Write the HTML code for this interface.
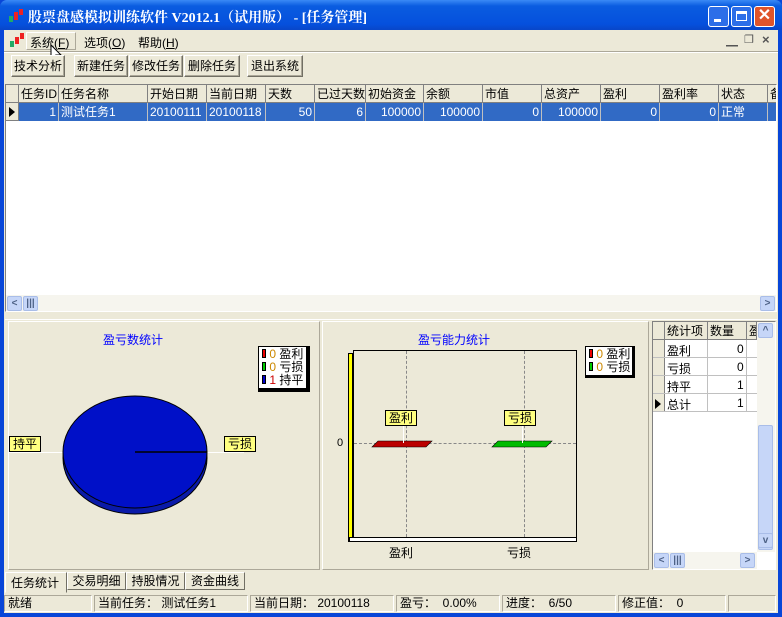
<!DOCTYPE html>
<html><head><meta charset="utf-8"><style>
*{margin:0;padding:0;box-sizing:border-box}
body{width:782px;height:617px;overflow:hidden;background:#0846d8;font-family:"Liberation Sans","WenQuanYi Zen Hei","Noto Sans CJK SC",sans-serif;font-size:12px;position:relative}
.a{position:absolute}
.btn{position:absolute;top:55px;height:22px;background:#ece9d8;border:1px solid;border-color:#fff #716f64 #716f64 #fff;box-shadow:inset -1px -1px #aca899;font-size:12px;line-height:20px;text-align:center}
.hd{position:absolute;top:0;height:18px;border-right:1px solid #808080;border-bottom:1px solid #808080;background:#ece9d8;line-height:18px;padding-left:2px;white-space:nowrap;overflow:hidden}
.cl{position:absolute;top:18px;height:18px;border-right:1px solid #c0c0c0;line-height:18px;color:#fff;background:#316ac5;white-space:nowrap;overflow:hidden;padding:0 2px}
.lab{position:absolute;background:#ffff80;border:1px solid #000;font-size:12px;line-height:14px;padding:0 3px}
.sb{position:absolute;border:1px solid;border-color:#aca899 #fff #fff #aca899;height:17px;line-height:15px;padding-left:3px;top:595px;font-size:12px}
.sc{position:absolute;width:15px;height:15px;background:#c6d6f8;border:1px solid #a9bde8;border-radius:2px;color:#4d6185;font-size:10px;line-height:13px;text-align:center;font-weight:bold}
</style></head><body>
<!-- title bar -->
<div class="a" style="left:0;top:0;width:782px;height:30px;background:linear-gradient(#3a8af6,#0a5ce0 20%,#0550dd 80%,#0846c8);border-radius:7px 7px 0 0"></div>
<div class="a" style="left:8px;top:8px;width:16px;height:16px"><div class="a" style="left:1px;top:8px;width:4px;height:6px;background:#2a6"></div><div class="a" style="left:6px;top:4px;width:4px;height:8px;background:#e22"></div><div class="a" style="left:11px;top:1px;width:4px;height:6px;background:#e22"></div></div>
<div class="a" style="left:28px;top:7px;color:#fff;font-weight:bold;font-size:14px;font-family:'Liberation Serif','Noto Serif CJK SC',serif;white-space:nowrap">股票盘感模拟训练软件 V2012.1（试用版） - [任务管理]</div>
<div class="a" style="left:708px;top:6px;width:21px;height:21px;border:1px solid #fff;border-radius:3px;background:#2c6ee8"><div class="a" style="left:5px;top:12px;width:7px;height:3px;background:#fff"></div></div>
<div class="a" style="left:731px;top:6px;width:21px;height:21px;border:1px solid #fff;border-radius:3px;background:#2c6ee8"><div class="a" style="left:4px;top:4px;width:11px;height:10px;border:1px solid #fff;border-top-width:3px"></div></div>
<div class="a" style="left:754px;top:6px;width:21px;height:21px;border:1px solid #fff;border-radius:3px;background:#e0542a;color:#fff;font-weight:bold;font-size:16px;line-height:18px;text-align:center">✕</div>
<!-- client -->
<div class="a" style="left:4px;top:30px;width:774px;height:583px;background:#ece9d8"></div>
<!-- menu -->
<div class="a" style="left:10px;top:33px;width:14px;height:14px"><div class="a" style="left:0;top:8px;width:4px;height:6px;background:#2a6"></div><div class="a" style="left:5px;top:4px;width:4px;height:7px;background:#e22"></div><div class="a" style="left:10px;top:0;width:4px;height:6px;background:#e22"></div></div>
<div class="a" style="left:26px;top:32px;width:50px;height:18px;border:1px solid;border-color:#fff #aca899 #aca899 #fff"></div>
<div class="a" style="left:30px;top:34px;white-space:nowrap">系统(<u>F</u>)</div>
<div class="a" style="left:84px;top:34px;white-space:nowrap">选项(<u>O</u>)</div>
<div class="a" style="left:138px;top:34px;white-space:nowrap">帮助(<u>H</u>)</div>
<div class="a" style="left:726px;top:32px;color:#555;font-size:12px">▁</div>
<div class="a" style="left:744px;top:33px;color:#555;font-size:11px">❐</div>
<div class="a" style="left:762px;top:32px;color:#555;font-size:13px;font-weight:bold">×</div>
<div class="a" style="left:4px;top:51px;width:774px;height:2px;border-top:1px solid #aca899;border-bottom:1px solid #fff"></div>
<!-- cursor -->
<svg class="a" style="left:50px;top:44px" width="14" height="20"><path d="M1 1 L1 15 L4 12 L7 18 L9 17 L6 11 L11 11 Z" fill="#fff" stroke="#000"/></svg>
<!-- toolbar -->
<div class="btn" style="left:11px;width:54px">技术分析</div>
<div class="btn" style="left:74px;width:54px">新建任务</div>
<div class="btn" style="left:129px;width:54px">修改任务</div>
<div class="btn" style="left:184px;width:56px">删除任务</div>
<div class="btn" style="left:247px;width:56px">退出系统</div>
<!-- grid -->
<div class="a" style="left:5px;top:84px;width:772px;height:228px;background:#fff;border:1px solid;border-color:#808080 #fff #fff #808080;overflow:hidden">
<div class="hd" style="left:0;width:13px"></div>
<div class="hd" style="left:13px;width:40px">任务ID</div>
<div class="hd" style="left:53px;width:89px">任务名称</div>
<div class="hd" style="left:142px;width:59px">开始日期</div>
<div class="hd" style="left:201px;width:59px">当前日期</div>
<div class="hd" style="left:260px;width:49px">天数</div>
<div class="hd" style="left:309px;width:51px">已过天数</div>
<div class="hd" style="left:360px;width:58px">初始资金</div>
<div class="hd" style="left:418px;width:59px">余额</div>
<div class="hd" style="left:477px;width:59px">市值</div>
<div class="hd" style="left:536px;width:59px">总资产</div>
<div class="hd" style="left:595px;width:59px">盈利</div>
<div class="hd" style="left:654px;width:59px">盈利率</div>
<div class="hd" style="left:713px;width:49px">状态</div>
<div class="hd" style="left:762px;width:20px">备</div>
<div class="a" style="left:0;top:18px;width:13px;height:18px;background:#ece9d8;border-right:1px solid #808080;border-bottom:1px solid #808080"><div class="a" style="left:3px;top:4px;border-left:6px solid #000;border-top:5px solid transparent;border-bottom:5px solid transparent"></div></div>
<div class="cl" style="left:13px;width:40px;text-align:right">1</div>
<div class="cl" style="left:53px;width:89px">测试任务1</div>
<div class="cl" style="left:142px;width:59px">20100111</div>
<div class="cl" style="left:201px;width:59px">20100118</div>
<div class="cl" style="left:260px;width:49px;text-align:right">50</div>
<div class="cl" style="left:309px;width:51px;text-align:right">6</div>
<div class="cl" style="left:360px;width:58px;text-align:right">100000</div>
<div class="cl" style="left:418px;width:59px;text-align:right">100000</div>
<div class="cl" style="left:477px;width:59px;text-align:right">0</div>
<div class="cl" style="left:536px;width:59px;text-align:right">100000</div>
<div class="cl" style="left:595px;width:59px;text-align:right">0</div>
<div class="cl" style="left:654px;width:59px;text-align:right">0</div>
<div class="cl" style="left:713px;width:49px">正常</div>
<div class="cl" style="left:762px;width:20px"></div>
<div class="a" style="left:0;top:210px;width:770px;height:16px;background:#f6f5ee"></div>
<div class="sc" style="left:1px;top:211px">&lt;</div>
<div class="sc" style="left:17px;top:211px">|||</div>
<div class="sc" style="left:754px;top:211px">&gt;</div>
</div>
<!-- bottom panels -->
<div class="a" style="left:5px;top:319px;width:772px;height:252px;border-top:1px solid #fff"></div>
<div class="a" style="left:8px;top:321px;width:312px;height:249px;border:1px solid;border-color:#fff #aca899 #aca899 #fff"></div>
<div class="a" style="left:103px;top:331px;color:#00f">盈亏数统计</div>
<div class="a" style="left:258px;top:346px;width:52px;height:46px;background:#000"></div>
<div class="a" style="left:258px;top:346px;width:49px;height:43px;background:#fff;border:1px solid #000;font-size:12px;line-height:13px;padding:1px 0 0 3px">
<div><span style="display:inline-block;width:4px;height:9px;background:#e00;border:1px solid #000"></span> <span style="color:#c80">0</span> 盈利</div>
<div><span style="display:inline-block;width:4px;height:9px;background:#0c0;border:1px solid #000"></span> <span style="color:#c80">0</span> 亏损</div>
<div><span style="display:inline-block;width:4px;height:9px;background:#00c;border:1px solid #000"></span> <span style="color:#c00">1</span> 持平</div></div>
<div class="a" style="left:9px;top:452px;width:235px;height:1px;background:#fff"></div>
<svg class="a" style="left:55px;top:390px" width="160" height="130"><ellipse cx="80" cy="68" rx="72" ry="56" fill="#0a1aa8" stroke="#000"/><ellipse cx="80" cy="62" rx="72" ry="56" fill="#0010c8" stroke="#000"/><line x1="80" y1="62" x2="152" y2="62" stroke="#000" stroke-width="1.5"/></svg>
<div class="lab" style="left:9px;top:436px">持平</div>
<div class="lab" style="left:224px;top:436px">亏损</div>
<!-- bar panel -->
<div class="a" style="left:322px;top:321px;width:327px;height:249px;border:1px solid;border-color:#fff #aca899 #aca899 #fff"></div>
<div class="a" style="left:418px;top:331px;color:#00f">盈亏能力统计</div>
<div class="a" style="left:348px;top:353px;width:5px;height:189px;background:#ff0;border:1px solid #000"></div>
<div class="a" style="left:349px;top:537px;width:228px;height:5px;background:#fff;border:1px solid #000"></div>
<div class="a" style="left:353px;top:350px;width:224px;height:188px;border:1px solid #000;background:#ece9d8"></div>
<div class="a" style="left:406px;top:351px;height:186px;border-left:1px dashed #888"></div>
<div class="a" style="left:524px;top:351px;height:186px;border-left:1px dashed #888"></div>
<div class="a" style="left:354px;top:443px;width:222px;border-top:1px dashed #888"></div>
<div class="a" style="left:337px;top:437px;font-size:11px">0</div>
<svg class="a" style="left:370px;top:440px" width="200" height="10"><polygon points="8,1 62,1 56,7 2,7" fill="#b00" stroke="#000" stroke-width=".6"/><polygon points="128,1 182,1 176,7 122,7" fill="#0b0" stroke="#000" stroke-width=".6"/></svg>
<div class="a" style="left:403px;top:425px;width:1px;height:18px;background:#fff"></div>
<div class="a" style="left:522px;top:425px;width:1px;height:18px;background:#fff"></div>
<div class="lab" style="left:385px;top:410px">盈利</div>
<div class="lab" style="left:504px;top:410px">亏损</div>
<div class="a" style="left:389px;top:544px">盈利</div>
<div class="a" style="left:507px;top:544px">亏损</div>
<div class="a" style="left:585px;top:346px;width:50px;height:32px;background:#000"></div>
<div class="a" style="left:585px;top:346px;width:48px;height:30px;background:#fff;border:1px solid #000;line-height:13px;padding:1px 0 0 3px">
<div><span style="display:inline-block;width:4px;height:9px;background:#e00;border:1px solid #000"></span> <span style="color:#c80">0</span> 盈利</div>
<div><span style="display:inline-block;width:4px;height:9px;background:#0c0;border:1px solid #000"></span> <span style="color:#c80">0</span> 亏损</div></div>
<!-- right grid -->
<div class="a" style="left:652px;top:321px;width:124px;height:249px;background:#fff;border:1px solid;border-color:#808080 #fff #fff #808080;overflow:hidden">
<div class="hd" style="left:0;width:12px"></div>
<div class="hd" style="left:12px;width:43px">统计项</div>
<div class="hd" style="left:55px;width:39px">数量</div>
<div class="hd" style="left:94px;width:10px">盈</div>
<div class="a" style="left:0;top:18px;width:104px;height:72px;font-size:12px">
<div class="a" style="left:0;top:0;width:12px;height:72px;background:#ece9d8;border-right:1px solid #808080"></div>
<div class="a" style="left:14px;top:2px">盈利</div><div class="a" style="left:84px;top:2px">0</div>
<div class="a" style="left:14px;top:20px">亏损</div><div class="a" style="left:84px;top:20px">0</div>
<div class="a" style="left:14px;top:38px">持平</div><div class="a" style="left:84px;top:38px">1</div>
<div class="a" style="left:14px;top:56px">总计</div><div class="a" style="left:84px;top:56px">1</div>
<div class="a" style="left:2px;top:59px;border-left:6px solid #000;border-top:5px solid transparent;border-bottom:5px solid transparent"></div>
<div class="a" style="left:0;top:17px;width:104px;border-top:1px solid #c0c0c0"></div>
<div class="a" style="left:0;top:35px;width:104px;border-top:1px solid #c0c0c0"></div>
<div class="a" style="left:0;top:53px;width:104px;border-top:1px solid #c0c0c0"></div>
<div class="a" style="left:0;top:71px;width:104px;border-top:1px solid #c0c0c0"></div>
<div class="a" style="left:54px;top:0;height:72px;border-left:1px solid #c0c0c0"></div>
<div class="a" style="left:93px;top:0;height:72px;border-left:1px solid #c0c0c0"></div>
</div>
<div class="a" style="left:104px;top:0;width:18px;height:230px;background:#f6f5ee"></div>
<div class="sc" style="left:105px;top:1px">^</div>
<div class="a" style="left:105px;top:103px;width:15px;height:125px;background:#c6d6f8;border:1px solid #a9bde8;border-radius:2px"></div>
<div class="sc" style="left:105px;top:211px">v</div>
<div class="a" style="left:0;top:230px;width:104px;height:17px;background:#f6f5ee"></div>
<div class="sc" style="left:1px;top:231px">&lt;</div>
<div class="sc" style="left:17px;top:231px">|||</div>
<div class="sc" style="left:87px;top:231px">&gt;</div>
</div>
<!-- tabs -->
<div class="a" style="left:5px;top:572px;width:62px;height:21px;border:1px solid;border-color:#fff #716f64 #ece9d8 #fff;background:#ece9d8;line-height:20px;padding-left:5px">任务统计</div>
<div class="a" style="left:67px;top:572px;width:59px;height:18px;border:1px solid;border-color:#fff #716f64 #716f64 #fff;line-height:16px;text-align:center">交易明细</div>
<div class="a" style="left:126px;top:572px;width:59px;height:18px;border:1px solid;border-color:#fff #716f64 #716f64 #fff;line-height:16px;text-align:center">持股情况</div>
<div class="a" style="left:185px;top:572px;width:60px;height:18px;border:1px solid;border-color:#fff #716f64 #716f64 #fff;line-height:16px;text-align:center">资金曲线</div>
<!-- status -->
<div class="sb" style="left:4px;width:88px">就绪</div>
<div class="sb" style="left:94px;width:154px">当前任务： 测试任务1</div>
<div class="sb" style="left:250px;width:144px">当前日期： 20100118</div>
<div class="sb" style="left:396px;width:104px">盈亏： &nbsp;0.00%</div>
<div class="sb" style="left:502px;width:114px">进度： &nbsp;6/50</div>
<div class="sb" style="left:618px;width:108px">修正值： &nbsp;0</div>
<div class="sb" style="left:728px;width:48px"></div>
</body></html>
